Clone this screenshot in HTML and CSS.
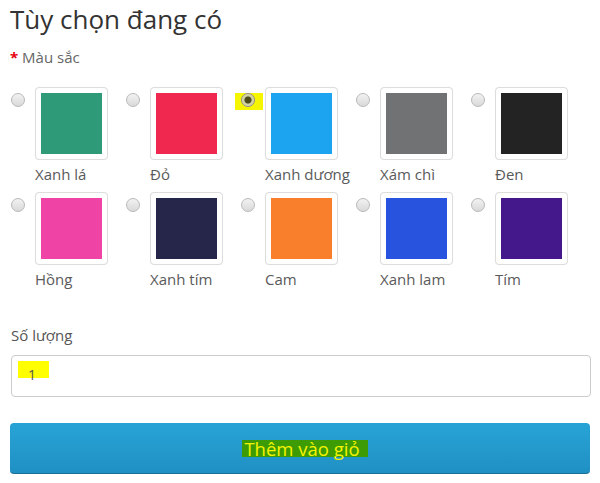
FILE: index.html
```html
<!DOCTYPE html>
<html lang="vi">
<head>
<meta charset="utf-8">
<link rel="stylesheet" href="styles.css">
</head>
<body>
<div class="page">
  <h1 class="title">Tùy chọn đang có</h1>
  <div class="field-label"><span class="req">*</span> Màu sắc</div>
  <div class="swatches">
    <label class="opt"><span class="radio"></span><span class="pic"><span class="img" style="background:#2e9a78"></span><span class="name">Xanh lá</span></span></label>
    <label class="opt"><span class="radio"></span><span class="pic"><span class="img" style="background:#f0284f"></span><span class="name">Đỏ</span></span></label>
    <label class="opt"><span class="radio-wrap"><span class="radio checked"></span></span><span class="pic"><span class="img" style="background:#1da4f0"></span><span class="name">Xanh dương</span></span></label>
    <label class="opt"><span class="radio"></span><span class="pic"><span class="img" style="background:#717273"></span><span class="name">Xám chì</span></span></label>
    <label class="opt"><span class="radio"></span><span class="pic"><span class="img" style="background:#232323"></span><span class="name">Đen</span></span></label>
    <label class="opt"><span class="radio"></span><span class="pic"><span class="img" style="background:#ef43a6"></span><span class="name">Hồng</span></span></label>
    <label class="opt"><span class="radio"></span><span class="pic"><span class="img" style="background:#26254a"></span><span class="name">Xanh tím</span></span></label>
    <label class="opt"><span class="radio"></span><span class="pic"><span class="img" style="background:#fa7f2c"></span><span class="name">Cam</span></span></label>
    <label class="opt"><span class="radio"></span><span class="pic"><span class="img" style="background:#2853de"></span><span class="name">Xanh lam</span></span></label>
    <label class="opt"><span class="radio"></span><span class="pic"><span class="img" style="background:#44188a"></span><span class="name">Tím</span></span></label>
  </div>
  <div class="qty-label">Số lượng</div>
  <div class="qty-input"><span class="hl-yellow">1</span></div>
  <button class="btn"><span class="hl-green">Thêm vào giỏ</span></button>
</div>
</body>
</html>
```
FILE: styles.css
```css
* { box-sizing: border-box; }
html, body { margin: 0; padding: 0; background: #fff; }
body { font-family: "Open Sans", "Noto Sans", sans-serif; color: #333; }
.page { padding: 2px 9px 0 10px; width: 600px; }
.title { margin: 0; font-size: 26px; font-weight: 400; line-height: 34px; color: #333; }
.field-label { margin-top: 11px; font-size: 15px; line-height: 20px; color: #666; }
.req { color: #e4000f; font-weight: 700; }
.swatches { display: grid; grid-template-columns: repeat(5, 115px); row-gap: 6px; margin-top: 20px; padding-left: 1px; }
.opt { display: flex; align-items: flex-start; }
.radio { display: block; width: 14px; height: 14px; border-radius: 50%; border: 1px solid #b9b9b9; background: linear-gradient(#f2f2f2, #d9d9d9); margin-top: 6px; flex: none; }
.radio-wrap { display: block; background: #f5f500; padding: 0 8px 3px 6px; margin-left: -6px; margin-top: 6px; margin-right: -8px; flex: none; }
.radio-wrap .radio { margin-top: 0; }
.radio.checked { border-color: #8a8a8a; background: radial-gradient(circle, #4a4a1a 0 3px, #c9c9a0 4px, #e0e0a8 6px); }
.pic { display: flex; flex-direction: column; margin-left: 10px; }
.img { display: block; width: 73px; height: 73px; border: 1px solid #ddd; border-radius: 4px; padding: 5px; background-clip: content-box !important; box-shadow: 0 0 1px rgba(0,0,0,0.05); }
.name { display: block; margin-top: 2px; font-size: 15px; line-height: 24px; color: #5a5a5a; white-space: nowrap; }
.qty-label { margin-top: 34px; font-size: 15px; line-height: 20px; color: #555; padding-left: 1px; }
.qty-input { margin-top: 10px; margin-left: 1px; height: 42px; width: 580px; border: 1px solid #ccc; border-radius: 4px; padding: 5px 0 0 6px; font-size: 14px; color: #555; }
.hl-yellow { display: inline-block; background: #ffff00; width: 31px; padding: 7px 0 0 10px; height: 17px; line-height: 14px; }
.btn { display: flex; justify-content: center; align-items: center; margin-top: 26px; width: 580px; height: 51px; border: 0; border-bottom: 1px solid #1a6f95; border-radius: 4px; background: linear-gradient(#28a3d6, #2090c3); font-family: "Open Sans", "Noto Sans", sans-serif; font-size: 18.5px; padding: 0; }
.hl-green { background: #3d9c06; color: #f4f400; line-height: 17px; padding: 0 8px 0 2px; margin-left: 10px; }
```
